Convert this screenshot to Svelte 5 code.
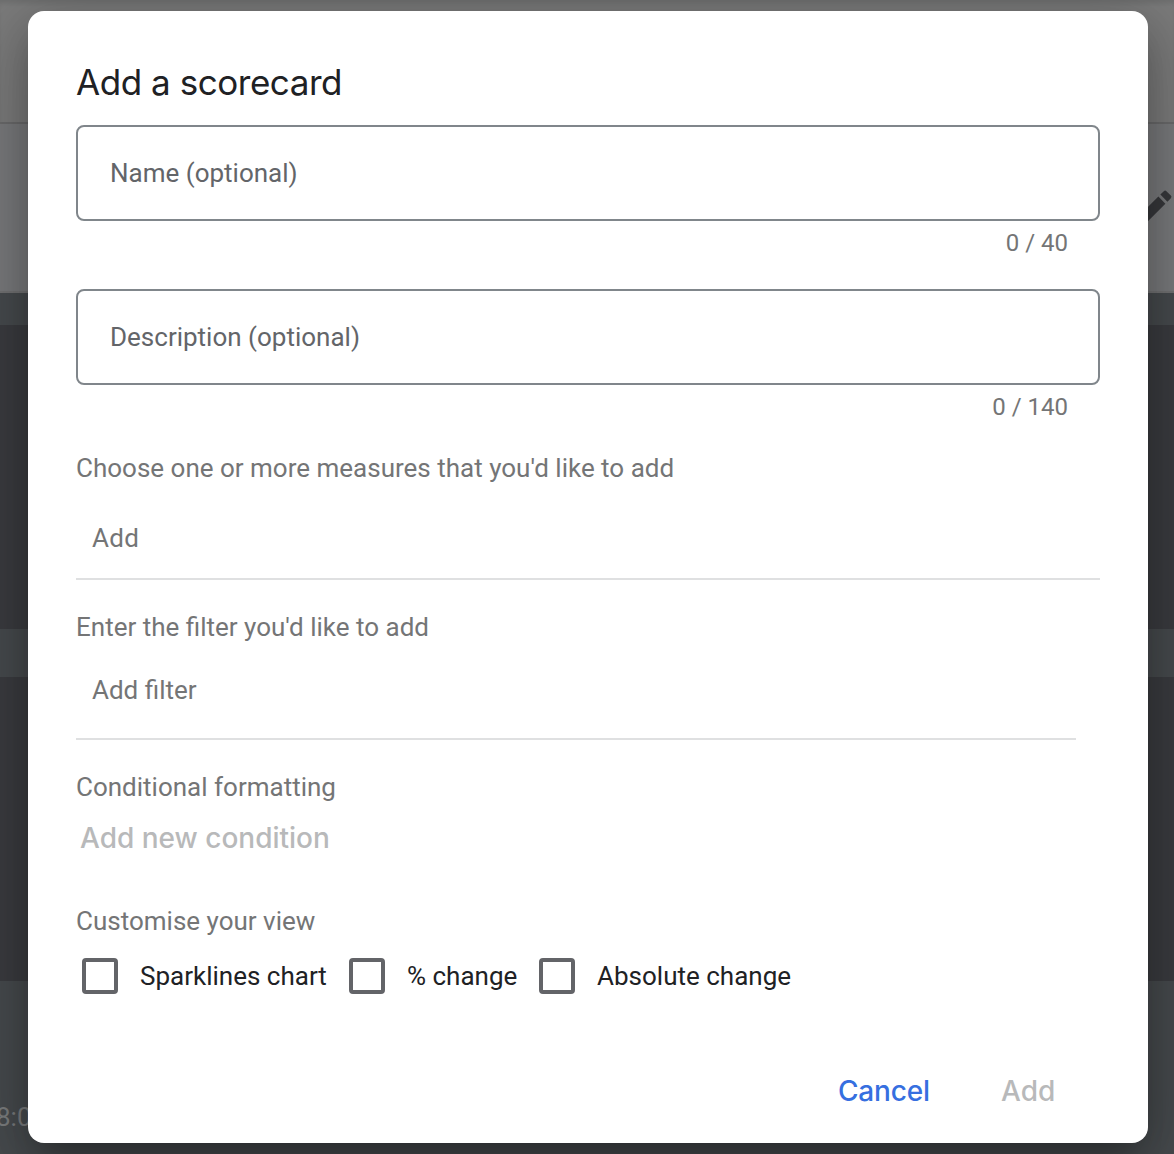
<script lang="ts">
  let name = $state('');
  let description = $state('');
  let options = $state([
    { label: 'Sparklines chart', kind: 'spark', checked: false },
    { label: '% change', kind: 'percent', checked: false },
    { label: 'Absolute change', kind: 'absolute', checked: false }
  ]);
</script>

<div class="page">
  <div class="backdrop">
    <div class="topbar"></div>
    <div class="toolbar">
      <svg class="pencil" viewBox="0 0 24 24" aria-hidden="true">
        <path d="M3 17.25V21h3.75L17.81 9.94l-3.75-3.75L3 17.25zM20.71 7.04a1 1 0 0 0 0-1.41l-2.34-2.34a1 1 0 0 0-1.41 0l-1.83 1.83 3.75 3.75 1.83-1.83z" />
      </svg>
    </div>
    <div class="cards">
      <div class="card"></div>
      <div class="card"></div>
    </div>
    <div class="time">8:0</div>
  </div>

  <div class="dialog" role="dialog" aria-labelledby="title">
    <h1 id="title">Add a scorecard</h1>

    <input class="field" placeholder="Name (optional)" maxlength="40" bind:value={name} />
    <div class="counter">{name.length} / 40</div>
    <input class="field" placeholder="Description (optional)" maxlength="140" bind:value={description} />
    <div class="counter long">{description.length} / 140</div>

    <div class="label measures">Choose one or more measures that you'd like to add</div>
    <div class="entry add">Add</div>
    <div class="label filter">Enter the filter you'd like to add</div>
    <div class="entry add-filter">Add filter</div>

    <div class="label formatting">Conditional formatting</div>
    <button class="condition" disabled>Add new condition</button>

    <div class="label view">Customise your view</div>
    <div class="options">
      {#each options as option}
        <label class={option.kind}>
          <input type="checkbox" bind:checked={option.checked} />
          <span>{option.label}</span>
        </label>
      {/each}
    </div>

    <div class="actions">
      <button class="cancel">Cancel</button>
      <button class="submit" disabled>Add</button>
    </div>
  </div>
</div>

<style>
  :global(body) { margin: 0; overflow: hidden; }
  * { box-sizing: border-box; }
  .page {
    position: relative;
    width: 1174px;
    height: 1154px;
    padding: 11px 26px 11px 28px;
    overflow: hidden;
    font-family: Roboto, sans-serif;
    font-size: 26px;
    color: #747576;
  }
  .backdrop { position: absolute; inset: 0; background: #474b4e; }
  .topbar {
    height: 124px;
    background: #7c7c7c;
    border-bottom: 2px solid #6b6b6c;
    box-shadow: inset 0 5px 5px -2px #55565855;
  }
  .toolbar {
    height: 169px;
    background: #7a7b7d;
    border-bottom: 2px solid #727273;
    display: flex;
    justify-content: flex-end;
    padding-top: 61px;
  }
  .pencil { flex: none; width: 45px; height: 45px; margin-right: -3px; fill: #38393c; }
  .cards { padding-top: 32px; display: flex; flex-direction: column; gap: 48px; }
  .card { height: 304px; background: #3b3c40; }
  .time { margin: 120px 0 0 -4px; line-height: 32px; color: #7b7d7e; }

  .dialog {
    position: relative;
    height: 1132px;
    padding: 48px;
    border-radius: 16px;
    background: #fff;
    box-shadow: 0 22px 30px -14px #0003, 0 24px 64px 4px #0000002e, 0 10px 60px 8px #0000002b;
    display: flex;
    flex-direction: column;
  }
  .dialog > * { flex: none; }
  h1 {
    margin: 0;
    height: 66px;
    font: 400 35px/46px Inter, sans-serif;
    letter-spacing: -0.45px;
    color: #202124;
  }
  .field {
    width: 100%;
    height: 96px;
    padding: 0 32px;
    border: 2px solid #80868b;
    border-radius: 8px;
    outline: none;
    background: #fff;
    font: 400 26px Roboto, sans-serif;
    color: #202124;
  }
  .field::placeholder { color: #636569; opacity: 1; }
  .counter {
    height: 68px;
    padding: 6px 32px 0 0;
    text-align: right;
    font-size: 24px;
    line-height: 32px;
  }
  .counter.long { height: 67px; }
  .label { line-height: 32px; }
  .entry { border-bottom: 2px solid #dfe0e1; padding-left: 16px; line-height: 32px; }
  .measures { height: 64px; }
  .add { height: 64px; padding-top: 6px; letter-spacing: 0.3px; }
  .filter { height: 63px; margin-top: 31px; }
  .add-filter { height: 66px; width: 1000px; }
  .formatting { height: 49px; margin-top: 31px; }
  button { border: 0; padding: 0; background: none; font: 500 28px/36px Inter, sans-serif; }
  .condition { height: 36px; align-self: flex-start; margin-left: 4px; color: #b8b9ba; }
  .view { height: 53px; margin-top: 49px; }
  .options { display: flex; color: #202124; height: 36px; }
  .options label { display: flex; align-items: center; gap: 22px; line-height: 36px; white-space: nowrap; }
  .options input { appearance: none; flex: none; width: 36px; height: 36px; margin: 0; border: 4px solid #636468; border-radius: 4px; }
  .options input:checked { background: #1a73e8; border-color: #1a73e8; }
  .spark { width: 267px; margin-left: 6px; }
  .percent { width: 190px; }
  .actions { margin-top: 79px; display: flex; padding-left: 762px; }
  .cancel { width: 163px; text-align: left; letter-spacing: -0.2px; color: #366fe0; }
  .submit { color: #b8b9ba; }
</style>
